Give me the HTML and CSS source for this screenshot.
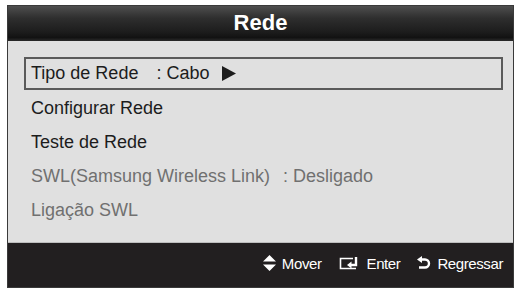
FILE: index.html
```html
<!DOCTYPE html>
<html>
<head>
<meta charset="utf-8">
<link rel="stylesheet" href="styles.css">
</head>
<body>
<div class="panel">
  <div class="header">Rede</div>
  <div class="menu">
    <div class="row selected"><span class="label wide">Tipo de Rede</span><span class="value">: Cabo</span><svg class="arrow" width="14" height="15" viewBox="0 0 14 15"><path d="M0 0 L14 7.5 L0 15 Z" fill="#1c1c1c"/></svg></div>
    <div class="row">Configurar Rede</div>
    <div class="row">Teste de Rede</div>
    <div class="row disabled"><span class="label">SWL(Samsung Wireless Link)</span><span class="value">: Desligado</span></div>
    <div class="row disabled">Ligação SWL</div>
  </div>
  <div class="footer">
    <span class="hint">
      <svg class="icon" width="13" height="16" viewBox="0 0 13 16"><path d="M6.5 0 L13 6.5 H0 Z M0 9.5 H13 L6.5 16 Z" fill="#fff"/></svg>
      Mover
    </span>
    <span class="hint">
      <svg class="icon" width="22" height="13" viewBox="0 0 22 13"><path d="M14 1.5 H1.5 V11.5 H17" fill="none" stroke="#fff" stroke-width="1.6"/><path d="M17 0 V8 H11" fill="none" stroke="#fff" stroke-width="2.4"/><path d="M8 8 L12.5 4.5 V11.5 Z" fill="#fff"/></svg>
      Enter
    </span>
    <span class="hint">
      <svg class="icon" width="14" height="14" viewBox="0 0 14 14"><path d="M4 3.5 H8 A4 4 0 0 1 8 11.5 H2" fill="none" stroke="#fff" stroke-width="2.4"/><path d="M0 3.5 L5 0 V7 Z" fill="#fff"/></svg>
      Regressar
    </span>
  </div>
</div>
</body>
</html>
```
FILE: styles.css
```css
html, body {
  margin: 0;
  padding: 0;
  background: #fff;
}
body {
  font-family: "Liberation Sans", Arial, sans-serif;
}
.panel {
  margin: 5px 0 0 7px;
  width: 507px;
  border: 1px solid #3a3a3a;
  box-sizing: border-box;
  display: flex;
  flex-direction: column;
}
.header {
  height: 35px;
  background: linear-gradient(#4e4e4e 0%, #2e2e2e 35%, #1c1c1c 75%, #121212 90%, #2a2a2a 100%);
  color: #fff;
  font-weight: bold;
  font-size: 22px;
  text-align: center;
  line-height: 33px;
}
.menu {
  height: 202px;
  background: #e0e0e0;
  padding: 16px 10px 0 16px;
  box-sizing: border-box;
  border-bottom: 1px solid #bdbdbd;
}
.row {
  height: 34px;
  box-sizing: border-box;
  padding-left: 7px;
  display: flex;
  align-items: center;
  font-size: 18px;
  color: #1c1c1c;
}
.row.selected {
  height: 33px;
  margin-bottom: 1px;
  border: 2px solid #5a5a5a;
  padding-left: 5px;
}
.row.disabled {
  color: #707070;
}
.label {
  margin-right: 13px;
}
.label.wide {
  margin-right: 18px;
}
.arrow {
  display: block;
  margin-left: 13px;
}
.footer {
  height: 44px;
  background: #221f20;
  display: flex;
  justify-content: flex-end;
  align-items: center;
  gap: 17px;
  padding-right: 10px;
  padding-bottom: 4px;
  box-sizing: border-box;
  color: #fff;
  font-size: 15px;
  letter-spacing: -0.4px;
}
.hint {
  display: flex;
  align-items: center;
  gap: 6px;
}
.icon {
  display: block;
}
```
